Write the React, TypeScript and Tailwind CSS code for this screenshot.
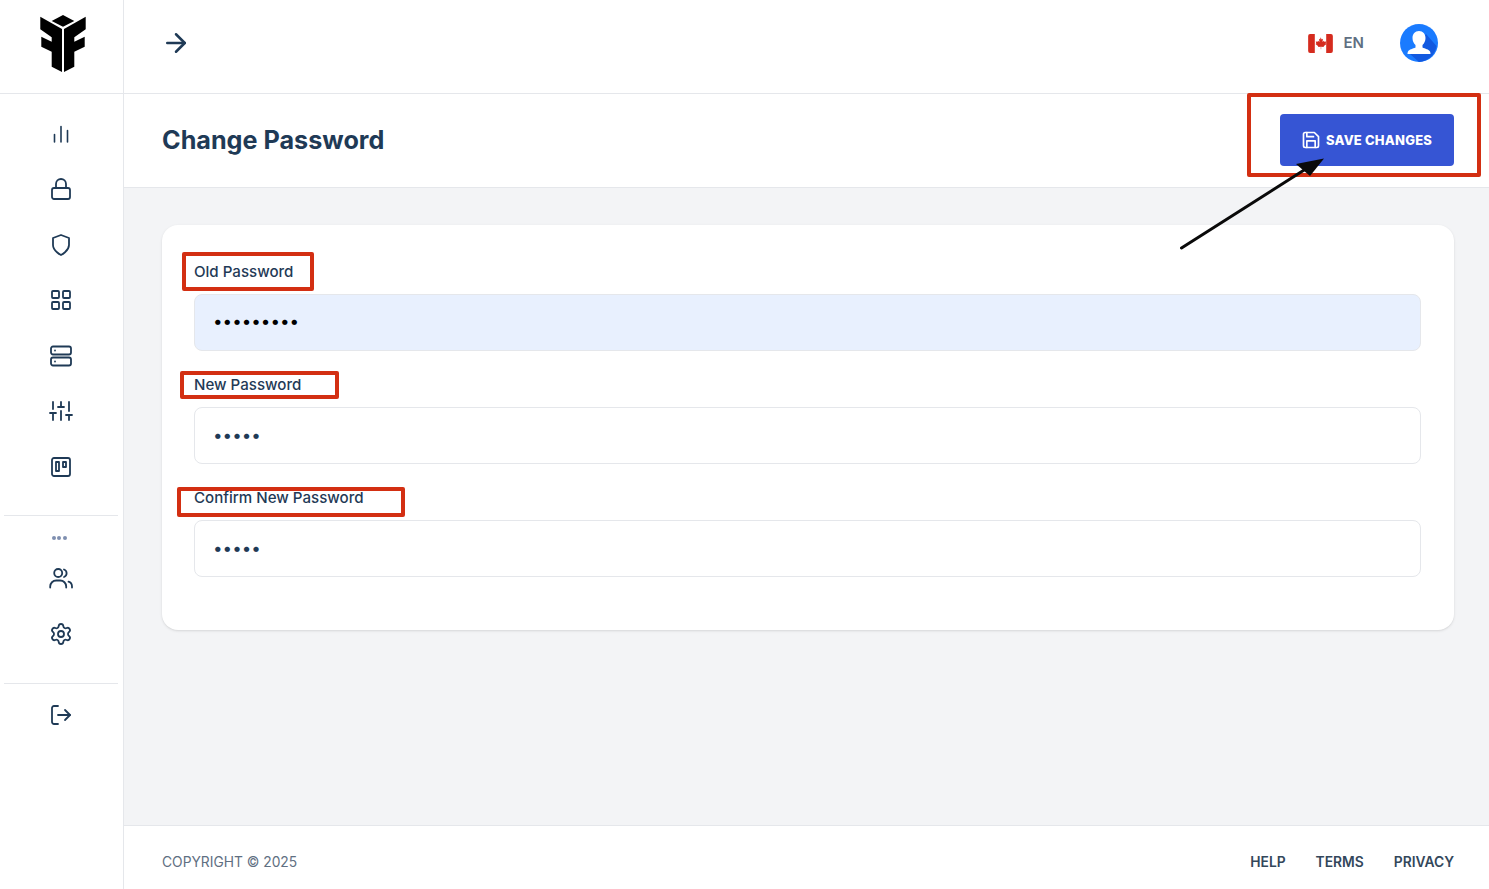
import React from 'react';
import { ArrowRight, LayoutGrid, Settings, LogOut } from 'lucide-react';

const ink = '#1f3a56';

const Logo = () => (
  <svg width="50" height="60" viewBox="38 14 50 60" fill="#000">
    <polygon points="63,15 74.3,21 63,26.7 51.7,21" />
    <polygon points="40.3,16.7 62,29 62,72 51.7,66.7 51.7,51.7 41.3,46.7 41.3,36.7 51.7,41.7 51.7,37.3 40.3,29.3" />
    <polygon points="85.7,16.7 64,29 64,72 74.3,66.7 74.3,51.7 84.7,46.7 84.7,36.7 74.3,41.7 74.3,37.3 85.7,29.3" />
  </svg>
);

const Line = ({ children }: { children: React.ReactNode }) => (
  <svg width="24" height="24" viewBox="0 0 24 24" fill="none" stroke={ink} strokeWidth="1.8" strokeLinecap="round" strokeLinejoin="round">
    {children}
  </svg>
);

const BarsIcon = () => (
  <svg width="24" height="24" viewBox="0 0 24 24" fill="none" stroke={ink} strokeWidth="1.6" strokeLinecap="round">
    <path d="M5.500 20v-7.500M12 20V4.500M18.500 20V8.500" />
  </svg>
);

const LockIcon = () => (
  <Line>
    <rect x="3" y="11" width="18" height="11" rx="2" />
    <path d="M7 11V7a5 5 0 0 1 10 0v4" />
  </Line>
);

const ShieldIcon = () => (
  <Line>
    <path d="M12 22s8-4 8-10V5l-8-3-8 3v7c0 6 8 10 8 10z" />
  </Line>
);

const ServerIcon = () => (
  <Line>
    <rect x="2" y="2.500" width="20" height="8" rx="2" />
    <rect x="2" y="13.500" width="20" height="8" rx="2" />
    <path d="M6 6.500h.01M6 17.500h.01" />
  </Line>
);

const SlidersIcon = () => (
  <Line>
    <path d="M4 21v-7M4 10V3M12 21v-9M12 8V3M20 21v-5M20 12V3M1 14h6M9 8h6M17 16h6" />
  </Line>
);

const BoardIcon = () => (
  <Line>
    <rect x="3" y="3" width="18" height="18" rx="2" />
    <rect x="7" y="7" width="3" height="9" />
    <rect x="14" y="7" width="3" height="5" />
  </Line>
);

const UsersIcon = () => (
  <Line>
    <circle cx="9.200" cy="6" r="4" />
    <path d="M1.200 20.500v-1a6 6 0 0 1 6-6h4a6 6 0 0 1 6 6v1" />
    <path d="M15 2.500a4 4 0 0 1 0 7.500" />
    <path d="M23 20.500v-1a5 5 0 0 0-3.500-4.800" />
  </Line>
);

const SaveIcon = () => (
  <svg width="20" height="20" viewBox="0 0 24 24" fill="none" stroke="#fff" strokeWidth="2" strokeLinecap="round" strokeLinejoin="round">
    <path d="M19 21H5a2 2 0 0 1-2-2V5a2 2 0 0 1 2-2h11l5 5v11a2 2 0 0 1-2 2z" />
    <path d="M17 21v-8H7v8M7 3v5h8" />
  </svg>
);

const Flag = () => (
  <svg className="mt-[2px]" width="25" height="19" viewBox="0 0 26 20">
    <path d="M7 0H2a2 2 0 0 0-2 2v16a2 2 0 0 0 2 2h5zM19 0h5a2 2 0 0 1 2 2v16a2 2 0 0 1-2 2h-5z" fill="#d52b1e" />
    <path d="M13 3.500l1.300 2.300 1.300-.7-.5 3.200 1.500-1.300.4 1.200 2-.3-.6 2 .9.500-3 2.400.3 1-2.900-.4v2.600h-.4v-2.600l-2.900.4.300-1-3-2.400.9-.5-.6-2 2 .3.400-1.200 1.500 1.300-.5-3.200 1.300.7z" fill="#d52b1e" />
  </svg>
);

const Avatar = () => (
  <svg width="40" height="40" viewBox="0 0 40 40">
    <circle cx="20" cy="20" r="19" fill="#1a7bff" />
    <path d="M27 11 37.500 23A19 19 0 0 1 20 39L11 31z" fill="#1259e0" />
    <path d="M20 8c4 0 6.500 3 6.500 7 0 3-1.300 5.500-3 7v2.500c2.500 1 6.500 2 7.500 4 .5 1 .5 2 .5 2.500h-23c0-.5 0-1.500.5-2.500 1-2 5-3 7.500-4V22c-1.700-1.500-3-4-3-7 0-4 2.500-7 6.500-7z" fill="#fff" />
  </svg>
);

const topItems = [
  <BarsIcon key="bars" />,
  <LockIcon key="lock" />,
  <ShieldIcon key="shield" />,
  <LayoutGrid key="grid" size={24} color={ink} strokeWidth={1.8} />,
  <ServerIcon key="server" />,
  <SlidersIcon key="sliders" />,
  <BoardIcon key="board" />,
];

const fields = [
  { label: 'Old Password', value: 'secret123', filled: true },
  { label: 'New Password', value: '12345', filled: false },
  { label: 'Confirm New Password', value: '12345', filled: false },
];

const Marker = ({ className }: { className: string }) => (
  <div className={`absolute border-[4px] border-[#d32f12] rounded-[2px] pointer-events-none ${className}`} />
);

export default function App() {
  return (
    <div className="relative flex h-[889px] overflow-hidden bg-white font-['Inter',sans-serif] text-[#1f3a56]">
      <aside className="flex w-[124px] shrink-0 flex-col border-r border-[#e5e7eb]">
        <div className="flex h-[94px] shrink-0 items-center justify-center border-b border-[#e5e7eb] pb-[5px] pl-[3px]">
          <Logo />
        </div>
        <div className="pt-3">
          {topItems.map((icon) => (
            <div key={icon.key} className="flex h-[55.5px] items-center justify-center pr-[2px]">
              {icon}
            </div>
          ))}
        </div>
        <div className="mx-1 mt-5 w-[114px] border-t border-[#e5e7eb]" />
        <div className="flex h-11 items-center justify-center pr-[5px]">
          <div className="flex gap-[1.500px]">
            <span className="size-1 rounded-full bg-[#7f8fb0]" />
            <span className="size-1 rounded-full bg-[#7f8fb0]" />
            <span className="size-1 rounded-full bg-[#7f8fb0]" />
          </div>
        </div>
        <div className="-mt-[8px] flex h-[55px] items-center justify-center pr-[2px]">
          <UsersIcon />
        </div>
        <div className="flex h-[55px] items-center justify-center pr-[2px]">
          <Settings size={24} color={ink} strokeWidth={1.8} />
        </div>
        <div className="mx-1 mt-[21px] w-[114px] border-t border-[#e5e7eb]" />
        <div className="flex h-[63px] items-center justify-center pr-[2px]">
          <LogOut size={24} color={ink} strokeWidth={1.8} />
        </div>
      </aside>

      <div className="flex min-w-0 flex-1 flex-col">
        <header className="flex h-[94px] shrink-0 items-center justify-between border-b border-[#e5e7eb] pb-2 pl-[37px] pr-[50px]">
          <ArrowRight size={30} color={ink} strokeWidth={2} />
          <div className="flex items-center">
            <Flag />
            <span className="ml-[11px] mt-[2px] text-[15px] font-semibold text-[#5f6f82]">EN</span>
            <div className="ml-[35px]"><Avatar /></div>
          </div>
        </header>

        <div className="flex h-[94px] shrink-0 items-center justify-between border-b border-[#e5e7eb] pl-[38px] pr-[35px]">
          <h1 className="text-[25.2px] font-bold text-[#1f3a56]">Change Password</h1>
          <button className="mb-[2px] flex h-[52px] w-[174px] items-center gap-[5px] rounded bg-[#3655d4] pl-[21px] text-[13px] font-extrabold tracking-[0.2px] text-white">
            <SaveIcon />
            <span className="mt-[2px]">SAVE CHANGES</span>
          </button>
        </div>

        <main className="flex-1 bg-[#f3f4f6] pl-[38px] pr-[35px] pt-[37px]">
          <section className="h-[405px] rounded-2xl bg-white pl-8 pr-[33px] pt-[37px] shadow-sm">
            {fields.map((field) => (
              <div key={field.label} className="mb-6">
                <label className="mb-3 block text-[15.1px] font-medium leading-5">{field.label}</label>
                <input
                  type="password"
                  readOnly
                  defaultValue={field.value}
                  className={`block h-[57px] w-full rounded-lg border border-[#e5e7eb] px-[18px] text-[17px] outline-none ${field.filled ? 'bg-[#e8f0fe] pb-[3px] text-black' : 'bg-white pb-px text-[#1f3a56]'}`}
                />
              </div>
            ))}
          </section>
        </main>

        <footer className="flex h-[64px] shrink-0 items-center justify-between border-t border-[#e5e7eb] pl-[38px] pr-[35px] pt-[10px] text-[13.8px]">
          <span className="text-[#5f6f82]">COPYRIGHT © 2025</span>
          <nav className="flex gap-[30px] font-semibold text-[#33475b]">
            <span>HELP</span>
            <span>TERMS</span>
            <span>PRIVACY</span>
          </nav>
        </footer>
      </div>

      <Marker className="left-[1247px] top-[93px] h-[84px] w-[234px]" />
      <Marker className="left-[182px] top-[252px] h-[39px] w-[132px]" />
      <Marker className="left-[180px] top-[371px] h-[28px] w-[159px]" />
      <Marker className="left-[177px] top-[487px] h-[30px] w-[228px]" />

      <svg className="absolute left-[1170px] top-[150px] pointer-events-none" width="170" height="110" viewBox="0 0 170 110">
        <path d="M11.500 98 142 15" stroke="#0a0a0a" strokeWidth="3" strokeLinecap="round" />
        <path d="M154 8.500 126 14 140 26z" fill="#0a0a0a" />
      </svg>
    </div>
  );
}
